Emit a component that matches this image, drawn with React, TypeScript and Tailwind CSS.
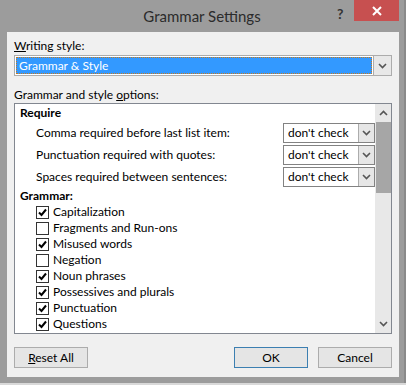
import React from "react";

const Chevron = ({ className = "" }: { className?: string }) => (
  <svg width="9" height="6" viewBox="0 0 9 6" className={className}>
    <path d="M1 1l3.5 3.5L8 1" stroke="#555" strokeWidth="1.6" fill="none" />
  </svg>
);

const ChevronUp = () => (
  <svg width="9" height="6" viewBox="0 0 9 6">
    <path d="M1 5l3.5-3.5L8 5" stroke="#555" strokeWidth="1.6" fill="none" />
  </svg>
);

const Check = ({ checked }: { checked: boolean }) => (
  <div className="w-[13px] h-[13px] border border-[#333] bg-white flex items-center justify-center shrink-0">
    {checked && (
      <svg width="11" height="11" viewBox="0 0 11 11">
        <path d="M2 5.5l2.5 2.5L9 2.5" stroke="#000" strokeWidth="2" fill="none" />
      </svg>
    )}
  </div>
);

const requireRows = [
  "Comma required before last list item:",
  "Punctuation required with quotes:",
  "Spaces required between sentences:",
];

const grammarRows: [string, boolean][] = [
  ["Capitalization", true],
  ["Fragments and Run-ons", false],
  ["Misused words", true],
  ["Negation", false],
  ["Noun phrases", true],
  ["Possessives and plurals", true],
  ["Punctuation", true],
  ["Questions", true],
];

export default function App() {
  return (
    <div
      className="w-[406px] h-[385px] bg-[#d9d9d9] text-[12px] text-black"
      style={{ fontFamily: '"Segoe UI", Lato, "Noto Sans", sans-serif' }}
    >
      <div className="w-[406px] h-[383px] bg-[#9c9c9c] flex flex-col border-r-2 border-r-[#8a8a8a]">
        {/* title bar */}
        <div className="relative h-[32px] shrink-0 flex items-center justify-center">
          <span className="text-[15px] text-[#2b2b2b]">Grammar Settings</span>
          <span className="absolute left-[337px] top-[3px] text-[14px] font-bold text-[#333]">?</span>
          <div className="absolute right-[5px] top-0 w-[45px] h-[21px] bg-[#c75050] flex items-center justify-center">
            <svg width="10" height="10" viewBox="0 0 10 10">
              <path d="M1 1l8 8M9 1L1 9" stroke="#fff" strokeWidth="2" />
            </svg>
          </div>
        </div>

        {/* client area */}
        <div className="ml-[7px] mr-[5px] h-[345px] shrink-0 bg-[#f0f0f0] px-[7px] pt-[6px] flex flex-col">
          <div className="h-[16px] leading-[16px] shrink-0">
            <span className="underline">W</span>riting style:
          </div>
          <div className="mt-[1px] h-[21px] shrink-0 border border-[#acacac] bg-white flex">
            <div className="flex-1 p-[1px]">
              <div className="h-full bg-[#3399ff] text-white leading-[15px] pl-[2px] border border-dotted border-[#c87a1e]">
                Grammar &amp; Style
              </div>
            </div>
            <div className="w-[18px] bg-[#e8e8e8] border-l border-[#acacac] flex items-center justify-center">
              <Chevron />
            </div>
          </div>

          <div className="mt-[11px] h-[16px] leading-[16px] shrink-0">
            Grammar and style <span className="underline">o</span>ptions:
          </div>
          <div className="h-[231px] shrink-0 border border-[#828790] bg-white flex overflow-hidden">
            <div className="flex-1 flex flex-col">
              <div className="h-[18px] shrink-0 leading-[18px] pl-[5px] font-bold">Require</div>
              {requireRows.map((r) => (
                <div key={r} className="h-[22px] shrink-0 flex items-center pl-[21px]">
                  <span className="flex-1">{r}</span>
                  <div className="w-[92px] h-[20px] border border-[#828282] bg-white flex">
                    <span className="flex-1 pl-[4px] leading-[18px]">don't check</span>
                    <div className="w-[16px] bg-[#e6e6e6] border-l border-[#acacac] flex items-center justify-center">
                      <Chevron />
                    </div>
                  </div>
                </div>
              ))}
              <div className="h-[16px] shrink-0 leading-[16px] pl-[5px] font-bold">Grammar:</div>
              {grammarRows.map(([label, on]) => (
                <div key={label} className="h-[16px] shrink-0 flex items-center pl-[21px] gap-[4px]">
                  <Check checked={on} />
                  <span className="leading-[16px]">{label}</span>
                </div>
              ))}
              <div className="h-[16px] shrink-0 flex items-start pt-[1px] pl-[21px]">
                <div className="w-[13px] h-[2px] bg-[#666]" />
              </div>
            </div>
            <div className="w-[16px] bg-[#e8e8e8] flex flex-col items-center">
              <div className="h-[18px] shrink-0 flex items-center justify-center">
                <ChevronUp />
              </div>
              <div className="w-[15px] h-[71px] shrink-0 bg-[#a6a6a6]" />
              <div className="flex-1" />
              <div className="h-[18px] shrink-0 flex items-center justify-center">
                <Chevron />
              </div>
            </div>
          </div>

          <div className="mt-[13px] flex shrink-0">
            <button className="w-[74px] h-[21px] border border-[#acacac] bg-[#e5e5e5] leading-[19px]">
              <span className="underline">R</span>eset All
            </button>
            <div className="flex-1" />
            <button className="w-[74px] h-[21px] border border-[#3c7fb1] bg-[#e5e5e5] leading-[19px]">
              OK
            </button>
            <button className="ml-[10px] w-[74px] h-[21px] border border-[#acacac] bg-[#e5e5e5] leading-[19px]">
              Cancel
            </button>
          </div>
        </div>
      </div>
    </div>
  );
}
